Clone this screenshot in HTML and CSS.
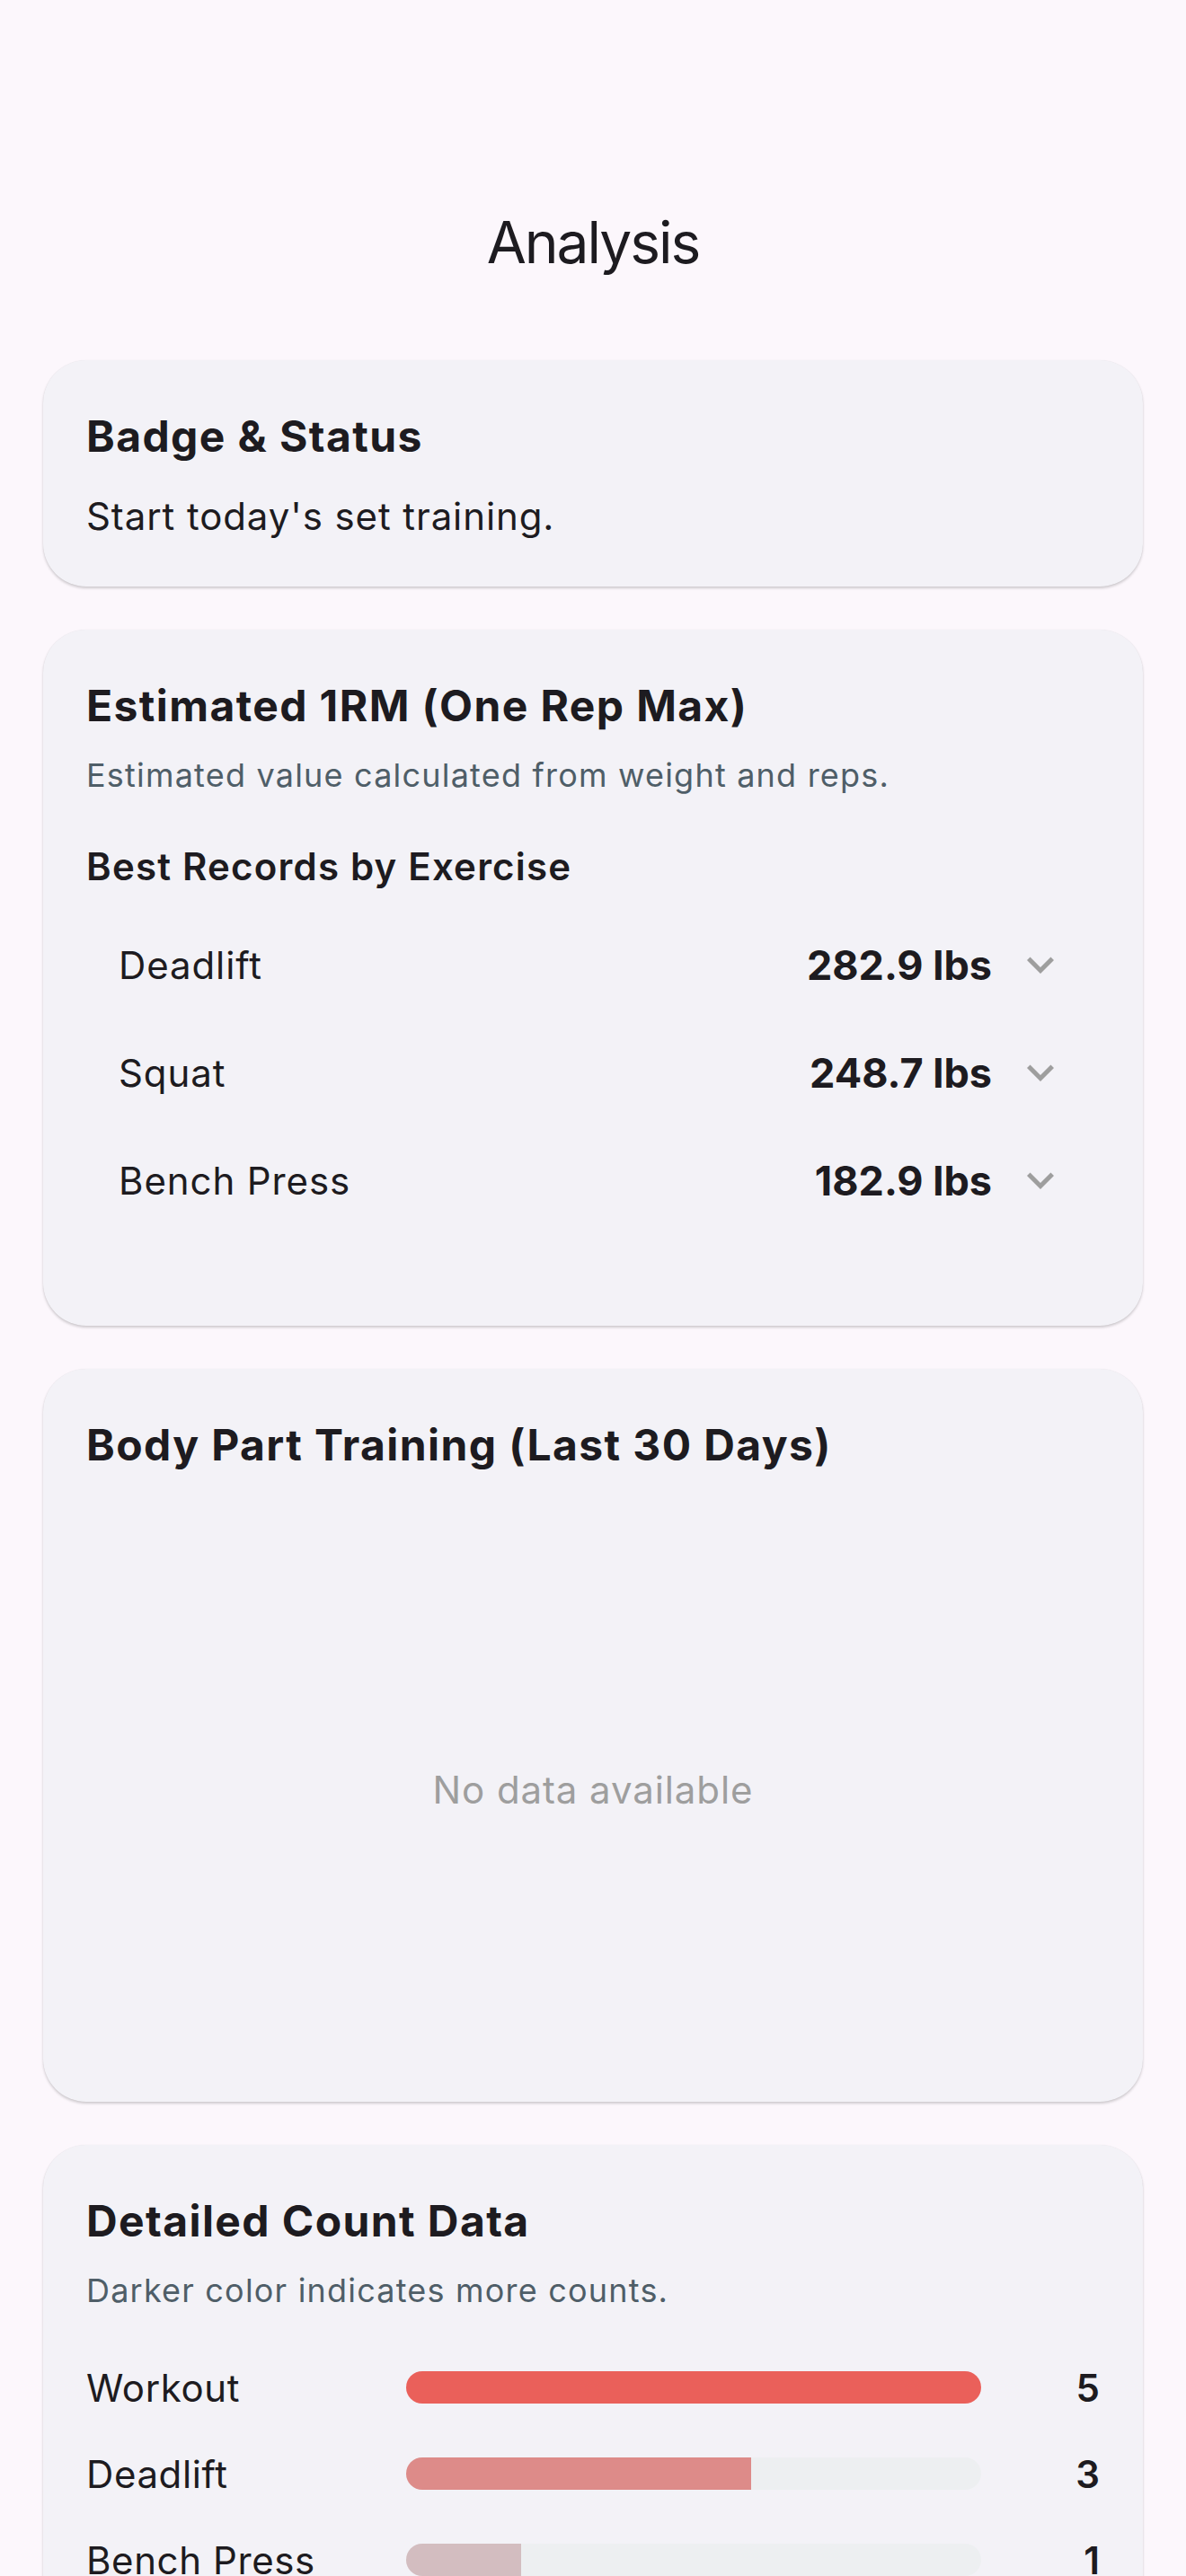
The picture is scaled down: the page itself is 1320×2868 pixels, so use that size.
FILE: index.html
```html
<!DOCTYPE html>
<html>
<head>
  <title>Analysis</title>
  <link rel="stylesheet" href="styles.css">
</head>
<body>

  <header class="app-bar">
    <h1>Analysis</h1>
  </header>

  <main class="content">

    <!-- Статус -->
    <section class="card">
      <h2 class="card-title">Badge &amp; Status</h2>
      <p class="card-text">Start today's set training.</p>
    </section>

    <!-- 1RM -->
    <section class="card">
      <h2 class="card-title">Estimated 1RM (One Rep Max)</h2>
      <p class="card-note">Estimated value calculated from weight and reps.</p>
      <h3 class="section-label">Best Records by Exercise</h3>
      <ul class="records">
        <li class="record">
          <span class="record-name">Deadlift</span>
          <span class="record-value">282.9 lbs</span>
          <svg class="chevron" viewBox="0 0 24 24"><path d="M16.59 8.59L12 13.17 7.41 8.59 6 10l6 6 6-6z"/></svg>
        </li>
        <li class="record">
          <span class="record-name">Squat</span>
          <span class="record-value">248.7 lbs</span>
          <svg class="chevron" viewBox="0 0 24 24"><path d="M16.59 8.59L12 13.17 7.41 8.59 6 10l6 6 6-6z"/></svg>
        </li>
        <li class="record">
          <span class="record-name">Bench Press</span>
          <span class="record-value">182.9 lbs</span>
          <svg class="chevron" viewBox="0 0 24 24"><path d="M16.59 8.59L12 13.17 7.41 8.59 6 10l6 6 6-6z"/></svg>
        </li>
      </ul>
    </section>

    <!-- Части тела -->
    <section class="card">
      <h2 class="card-title">Body Part Training (Last 30 Days)</h2>
      <div class="chart-empty">No data available</div>
    </section>

    <!-- Счётчики -->
    <section class="card">
      <h2 class="card-title">Detailed Count Data</h2>
      <p class="card-note">Darker color indicates more counts.</p>
      <div class="counts">
        <div class="count-row">
          <span class="count-label">Workout</span>
          <div class="bar"><div class="bar-fill" style="width: 100%; background: #ea605a;"></div></div>
          <span class="count-value">5</span>
        </div>
        <div class="count-row">
          <span class="count-label">Deadlift</span>
          <div class="bar"><div class="bar-fill" style="width: 60%; background: #dd8b89;"></div></div>
          <span class="count-value">3</span>
        </div>
        <div class="count-row">
          <span class="count-label">Bench Press</span>
          <div class="bar"><div class="bar-fill" style="width: 20%; background: #d3bdc0;"></div></div>
          <span class="count-value">1</span>
        </div>
      </div>
    </section>

  </main>

</body>
</html>
```

FILE: styles.css
```css
body {
  margin: 0;
  background: #fcf7fc;
  font-family: Inter, "Noto Sans", sans-serif;
  color: #1d1b20;
}
.app-bar {
  padding-top: 226px;
}
.app-bar h1 {
  margin: 0;
  height: 88px;
  line-height: 88px;
  font-size: 64px;
  font-weight: 400;
  letter-spacing: -2px;
  text-align: center;
}
.content {
  display: flex;
  flex-direction: column;
  gap: 48px;
  padding: 87px 48px 48px;
}
.card {
  background: #f3f2f7;
  border-radius: 48px;
  padding: 56px 48px 48px;
  box-shadow: 0 2px 3px rgba(0, 0, 0, 0.18), 0 0 1px rgba(0, 0, 0, 0.08);
}
.card-title {
  margin: 0;
  font-size: 48px;
  line-height: 58px;
  font-weight: 700;
  letter-spacing: 1.4px;
}
.card-text {
  margin: 30px 0 0;
  font-size: 42px;
  line-height: 60px;
  letter-spacing: 0.9px;
}
.card-note {
  margin: 24px 0 0;
  font-size: 36px;
  line-height: 48px;
  letter-spacing: 1.2px;
  color: #4f5e68;
}
.section-label {
  margin: 48px 0 0;
  font-size: 42px;
  line-height: 60px;
  font-weight: 600;
  letter-spacing: 1.2px;
}
.records {
  list-style: none;
  margin: 19px 0 54px;
  padding: 0;
}
.record {
  display: flex;
  align-items: center;
  height: 120px;
  padding: 0 36px;
}
.record-name {
  flex: 1;
  font-size: 42px;
  letter-spacing: 0.9px;
}
.record-value {
  font-size: 45px;
  font-weight: 700;
  letter-spacing: 0;
}
.chevron {
  width: 60px;
  height: 60px;
  margin-left: 24px;
  fill: #9e9e9e;
}
.chart-empty {
  display: flex;
  align-items: center;
  justify-content: center;
  height: 600px;
  margin-top: 54px;
  font-size: 42px;
  letter-spacing: 0.9px;
  color: #9e9e9e;
}
.counts {
  display: flex;
  flex-direction: column;
  gap: 36px;
  margin-top: 54px;
}
.count-row {
  display: flex;
  align-items: center;
  height: 60px;
}
.count-label {
  width: 356px;
  flex: none;
  font-size: 42px;
  letter-spacing: 0.6px;
}
.bar {
  flex: 1;
  height: 36px;
  border-radius: 18px;
  background: #edeff1;
  overflow: hidden;
}
.bar-fill {
  height: 100%;
}
.count-value {
  width: 132px;
  flex: none;
  text-align: right;
  font-size: 42px;
  font-weight: 600;
}
```
